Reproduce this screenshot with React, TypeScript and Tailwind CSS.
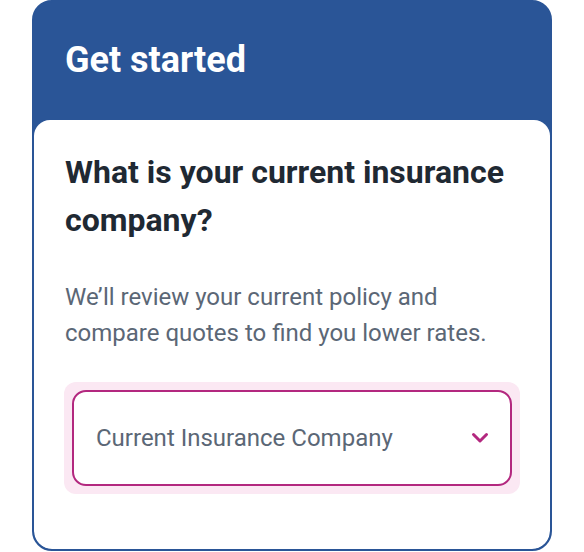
export default function App() {
  return (
    <div className="w-[584px] h-[552px] bg-white" style={{ fontFamily: "Roboto, 'Liberation Sans', sans-serif" }}>
      <div className="ml-[32px] w-[520px] h-[551px] flex flex-col rounded-[20px] border-2 border-[#2a5597] bg-[#2a5597] overflow-hidden">
        <div className="h-[118px] shrink-0 px-[31px] pt-[36px]">
          <h1 className="text-[36px] leading-[44px] font-bold text-white">Get started</h1>
        </div>
        <div className="flex-1 bg-white rounded-t-[16px] rounded-b-[18px] px-[31px] pt-[28px]">
          <h2 className="text-[32px] leading-[48px] font-bold text-[#1f2933]">
            What is your current insurance company?
          </h2>
          <p className="mt-[35px] text-[24px] leading-[36px] text-[#5b6776]">
            We’ll review your current policy and compare quotes to find you lower rates.
          </p>
          <div className="mt-[31px] -mx-[1px] rounded-[12px] bg-[#fbe8f3] p-[8px]">
            <div className="h-[96px] flex items-center justify-between rounded-[14px] border-2 border-[#b3287f] bg-white pl-[22px] pr-[21px]">
              <span className="text-[24px] text-[#5b6776]">Current Insurance Company</span>
              <svg width="18" height="12" viewBox="0 0 18 12" fill="none">
                <path d="M2.5 2.5l6.5 6.5 6.5-6.5" stroke="#b3287f" strokeWidth="3" strokeLinecap="round" strokeLinejoin="round" />
              </svg>
            </div>
          </div>
        </div>
      </div>
    </div>
  );
}
